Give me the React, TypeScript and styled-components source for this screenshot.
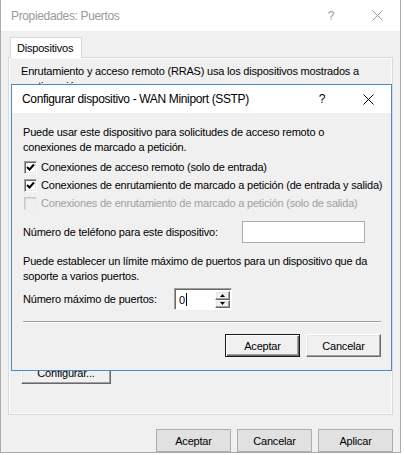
import React from "react";
import styled, { createGlobalStyle, css } from "styled-components";

const Global = createGlobalStyle`
  html, body { margin: 0; padding: 0; background: #ffffff; }
  body {
    font-family: "Liberation Sans", Arial, sans-serif;
    font-size: 11px;
    letter-spacing: -0.2px;
    color: #000000;
  }
  * { box-sizing: border-box; }
`;

const Window = styled.div`
  position: relative;
  width: 401px;
  height: 453px;
  background: #f0f0f0;
  border: 1px solid #aaaaaa;
  border-top: none;
  display: flex;
  flex-direction: column;
`;

const TitleBar = styled.div<{ $active?: boolean }>`
  height: ${(p) => (p.$active ? "28px" : "31px")};
  flex: none;
  background: #ffffff;
  display: flex;
  align-items: center;
  padding-left: 10px;
  color: ${(p) => (p.$active ? "#000000" : "#9a9a9a")};
  font-size: 12px;
  letter-spacing: -0.35px;
`;

const TitleText = styled.span`
  flex: 1;
  white-space: nowrap;
`;

const CaptionButton = styled.div<{ $active?: boolean }>`
  width: 46px;
  height: 100%;
  display: flex;
  align-items: center;
  justify-content: center;
  color: ${(p) => (p.$active ? "#000000" : "#9a9a9a")};
  font-size: 12px;
  svg { display: block; }
`;

const Body = styled.div`
  flex: 1;
  display: flex;
  flex-direction: column;
  padding: 6px 7px 0 7px;
`;

const TabStrip = styled.div`
  display: flex;
  padding-left: 2px;
  height: 20px;
  position: relative;
  z-index: 1;
`;

const Tab = styled.div`
  width: 72px;
  height: 21px;
  background: #ffffff;
  border: 1px solid #d9d9d9;
  border-bottom: none;
  padding-left: 6px;
  display: flex;
  align-items: center;
  padding-bottom: 1px;
`;

const TabPanel = styled.div`
  height: 358px;
  flex: none;
  border: 1px solid #d9d9d9;
  background: #f0f0f0;
  box-shadow: inset 0 0 0 1px #fbfbfb;
  display: flex;
  flex-direction: column;
  justify-content: space-between;
  padding: 6px 12px 30px 12px;
`;

const Paragraph = styled.p<{ $mt?: number }>`
  margin: ${(p) => p.$mt ?? 0}px 0 0 0;
  line-height: 15px;
  white-space: nowrap;
`;

const Footer = styled.div`
  display: flex;
  justify-content: flex-end;
  gap: 6px;
  padding: 9px 7px 0 0;
`;

const FlatButton = styled.button`
  width: 75px;
  height: 23px;
  background: #e1e1e1;
  border: 1px solid #adadad;
  font-family: inherit;
  font-size: 11px;
  letter-spacing: inherit;
  color: #000;
  padding: 0;
`;

const classicRaised = css`
  background: #f0f0f0;
  border: 1px solid;
  border-color: #ffffff #696969 #696969 #ffffff;
  box-shadow: inset -1px -1px 0 #a0a0a0, inset 1px 1px 0 #e3e3e3;
`;

const ClassicButton = styled.button<{ $default?: boolean; $width?: number }>`
  width: ${(p) => p.$width ?? 75}px;
  height: 23px;
  font-family: inherit;
  font-size: 11px;
  letter-spacing: inherit;
  color: #000;
  padding: 0;
  ${classicRaised}
  ${(p) =>
    p.$default &&
    css`
      border: 1px solid #1a1a1a;
      box-shadow: inset 1px 1px 0 #ffffff, inset -1px -1px 0 #696969,
        inset -2px -2px 0 #a0a0a0;
    `}
`;

const Dialog = styled.div`
  position: absolute;
  left: 10px;
  top: 84px;
  width: 381px;
  height: 287px;
  border: 1px solid #4a8bc9;
  background: #f0f0f0;
  display: flex;
  flex-direction: column;
`;

const DialogBody = styled.div`
  flex: 1;
  display: flex;
  flex-direction: column;
  padding: 12px 10px 12px 11px;
`;

const CheckRow = styled.label<{ $disabled?: boolean }>`
  display: flex;
  align-items: center;
  height: 18px;
  padding-left: 1px;
  gap: 4px;
  color: ${(p) => (p.$disabled ? "#a0a0a0" : "#000")};
  white-space: nowrap;
`;

const CheckList = styled.div`
  display: flex;
  flex-direction: column;
  margin-top: 3px;
`;

const CheckBox = styled.span<{ $disabled?: boolean }>`
  width: 13px;
  height: 13px;
  flex: none;
  background: ${(p) => (p.$disabled ? "#f0f0f0" : "#ffffff")};
  border: 1px solid;
  border-color: ${(p) =>
    p.$disabled ? "#c8c8c8 #ececec #ececec #c8c8c8" : "#a0a0a0 #ffffff #ffffff #a0a0a0"};
  box-shadow: ${(p) =>
    p.$disabled ? "inset 1px 1px 0 #d8d8d8" : "inset 1px 1px 0 #696969, inset -1px -1px 0 #e3e3e3"};
  display: flex;
  align-items: center;
  justify-content: center;
  svg { display: block; }
`;

const FieldRow = styled.div<{ $mt: number }>`
  display: flex;
  align-items: center;
  height: 22px;
  margin-top: ${(p) => p.$mt}px;
`;

const FieldLabel = styled.span<{ $width: number }>`
  width: ${(p) => p.$width}px;
  flex: none;
  white-space: nowrap;
`;

const TextInput = styled.div`
  width: 123px;
  height: 22px;
  background: #ffffff;
  border: 1px solid #abadb3;
`;

const SpinBox = styled.div`
  width: 58px;
  height: 22px;
  display: flex;
  background: #ffffff;
  border: 1px solid;
  border-color: #a0a0a0 #ffffff #ffffff #a0a0a0;
  box-shadow: inset 1px 1px 0 #696969;
  padding: 2px 1px 1px 2px;
`;

const SpinText = styled.div`
  flex: 1;
  display: flex;
  align-items: center;
  padding-left: 2px;
`;

const Caret = styled.span`
  width: 1px;
  height: 13px;
  background: #000;
  margin-left: 1px;
`;

const SpinButtons = styled.div`
  width: 15px;
  display: flex;
  flex-direction: column;
`;

const SpinButton = styled.div`
  flex: 1;
  ${classicRaised}
  display: flex;
  align-items: center;
  justify-content: center;
  svg { display: block; }
`;

const Separator = styled.div`
  height: 2px;
  margin-top: 11px;
  border-top: 1px solid #a0a0a0;
  border-bottom: 1px solid #ffffff;
`;

const DialogButtons = styled.div`
  display: flex;
  justify-content: flex-end;
  gap: 6px;
  margin-top: 11px;
`;

const Close = ({ color }: { color: string }) => (
  <svg width="11" height="11" viewBox="0 0 11 11">
    <path d="M0.5 0.5 L10.5 10.5 M10.5 0.5 L0.5 10.5" stroke={color} strokeWidth="1" />
  </svg>
);

const Check = () => (
  <svg width="9" height="9" viewBox="0 0 9 9">
    <path d="M1 4 L3.5 6.5 L8 1.5" stroke="#000" strokeWidth="2" fill="none" />
  </svg>
);

const Arrow = ({ up }: { up?: boolean }) => (
  <svg width="5" height="3" viewBox="0 0 5 3">
    <path d={up ? "M2.5 0 L5 3 L0 3 Z" : "M0 0 L5 0 L2.5 3 Z"} fill="#000" />
  </svg>
);

const checks = [
  { text: "Conexiones de acceso remoto (solo de entrada)", checked: true, disabled: false },
  { text: "Conexiones de enrutamiento de marcado a petición (de entrada y salida)", checked: true, disabled: false },
  { text: "Conexiones de enrutamiento de marcado a petición (solo de salida)", checked: false, disabled: true },
];

export default function App() {
  return (
    <>
      <Global />
      <Window>
        <TitleBar>
          <TitleText>Propiedades: Puertos</TitleText>
          <CaptionButton>?</CaptionButton>
          <CaptionButton>
            <Close color="#9a9a9a" />
          </CaptionButton>
        </TitleBar>
        <Body>
          <TabStrip>
            <Tab>Dispositivos</Tab>
          </TabStrip>
          <TabPanel>
            <Paragraph>
              Enrutamiento y acceso remoto (RRAS) usa los dispositivos mostrados a
              <br />
              continuación.
            </Paragraph>
            <div>
              <ClassicButton $width={90}>Configurar...</ClassicButton>
            </div>
          </TabPanel>
        </Body>
        <Footer>
          <FlatButton>Aceptar</FlatButton>
          <FlatButton>Cancelar</FlatButton>
          <FlatButton>Aplicar</FlatButton>
        </Footer>

        <Dialog>
          <TitleBar $active>
            <TitleText>Configurar dispositivo - WAN Miniport (SSTP)</TitleText>
            <CaptionButton $active>?</CaptionButton>
            <CaptionButton $active>
              <Close color="#000000" />
            </CaptionButton>
          </TitleBar>
          <DialogBody>
            <Paragraph>
              Puede usar este dispositivo para solicitudes de acceso remoto o
              <br />
              conexiones de marcado a petición.
            </Paragraph>
            <CheckList>
              {checks.map((c) => (
                <CheckRow key={c.text} $disabled={c.disabled}>
                  <CheckBox $disabled={c.disabled}>{c.checked && <Check />}</CheckBox>
                  {c.text}
                </CheckRow>
              ))}
            </CheckList>
            <FieldRow $mt={9}>
              <FieldLabel $width={219}>Número de teléfono para este dispositivo:</FieldLabel>
              <TextInput />
            </FieldRow>
            <Paragraph $mt={11}>
              Puede establecer un límite máximo de puertos para un dispositivo que da
              <br />
              soporte a varios puertos.
            </Paragraph>
            <FieldRow $mt={4}>
              <FieldLabel $width={151}>Número máximo de puertos:</FieldLabel>
              <SpinBox>
                <SpinText>
                  0<Caret />
                </SpinText>
                <SpinButtons>
                  <SpinButton>
                    <Arrow up />
                  </SpinButton>
                  <SpinButton>
                    <Arrow />
                  </SpinButton>
                </SpinButtons>
              </SpinBox>
            </FieldRow>
            <Separator />
            <DialogButtons>
              <ClassicButton $default>Aceptar</ClassicButton>
              <ClassicButton>Cancelar</ClassicButton>
            </DialogButtons>
          </DialogBody>
        </Dialog>
      </Window>
    </>
  );
}
